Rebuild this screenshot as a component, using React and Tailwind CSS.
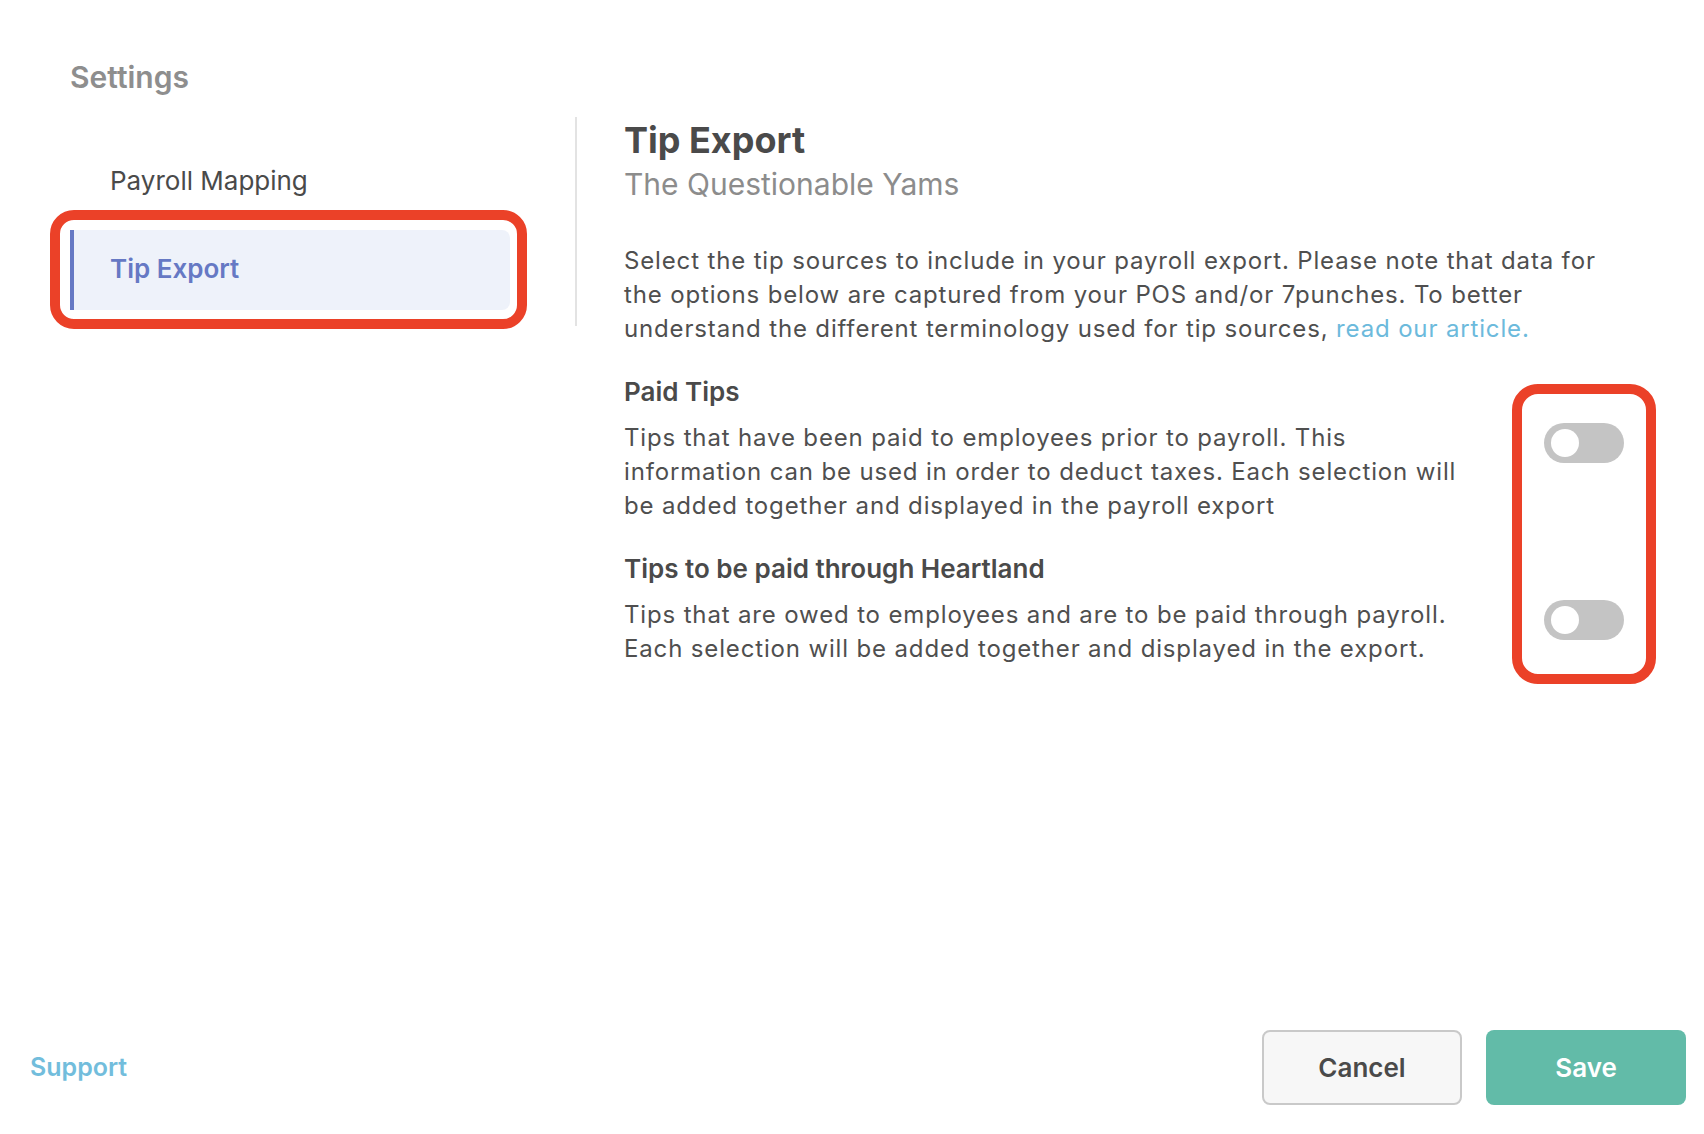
import React, { useState } from 'react';

// ========== SIDEBAR ==========
const SidebarItem = ({ label, active, onClick, highlight }) => (
  <div className="relative">
    <button
      onClick={onClick}
      className={`w-[440px] h-[80px] flex items-center pl-[36px] pb-[4px] border-l-4 rounded-r-[8px] text-[26px] text-left ${
        active
          ? 'border-[#6679c4] bg-[#eef2fa] text-[#6679c4] font-semibold'
          : 'border-transparent text-[#4a4a4a]'
      }`}
    >
      {label}
    </button>
    {highlight && (
      <div className="absolute -left-[20px] -right-[17px] -top-[20px] -bottom-[19px] border-[10px] border-[#eb4128] rounded-[24px] pointer-events-none" />
    )}
  </div>
);

const Toggle = ({ on, onChange }) => (
  <button
    onClick={() => onChange(!on)}
    className={`mt-[2px] w-[80px] h-[40px] rounded-full flex items-center px-[7px] shrink-0 ${
      on ? 'bg-[#62bba8] justify-end' : 'bg-[#c4c4c4] justify-start'
    }`}
  >
    <span className="w-[28px] h-[28px] rounded-full bg-white" />
  </button>
);

const TipSource = ({ title, desc, on, onChange, className }) => (
  <div className={className}>
    <h3 className="text-[26px] leading-[32px] font-semibold text-[#4a4a4a]">{title}</h3>
    <div className="mt-[13px] flex items-start justify-between">
      <p className="w-[848px] text-[24px] leading-[34px] tracking-[0.85px] text-[#4f4f4f]">{desc}</p>
      <Toggle on={on} onChange={onChange} />
    </div>
  </div>
);

export default function App() {
  const [activeTab, setActiveTab] = useState('tip');
  const [paidTips, setPaidTips] = useState(false);
  const [heartland, setHeartland] = useState(false);

  return (
    <div className="min-h-screen flex flex-col bg-white font-['Inter','Liberation_Sans',sans-serif] antialiased">
      <div className="flex-1 pl-[70px] pt-[57px]">
        <h1 className="text-[30px] leading-[40px] font-semibold text-[#8e8e8e]">Settings</h1>

        <div className="mt-[20px] flex items-start">
          {/* left nav */}
          <nav className="w-[507px] pr-[65px] pt-[25px] pb-[16px] border-r-2 border-[#e3e3e3] flex flex-col gap-2">
            <SidebarItem
              label="Payroll Mapping"
              active={activeTab === 'payroll'}
              onClick={() => setActiveTab('payroll')}
            />
            <SidebarItem
              label="Tip Export"
              active={activeTab === 'tip'}
              onClick={() => setActiveTab('tip')}
              highlight
            />
          </nav>

          {/* content */}
          <section className="pl-[47px] pt-[1px] w-[1047px]">
            <h2 className="text-[36px] leading-[44px] font-bold text-[#4a4a4a]">Tip Export</h2>
            <p className="mt-[2px] text-[30px] leading-[40px] text-[#8c8c8c]">The Questionable Yams</p>

            <p className="mt-[40px] text-[24px] leading-[34px] tracking-[0.85px] text-[#4f4f4f]">
              Select the tip sources to include in your payroll export. Please note that data for
              the options below are captured from your POS and/or 7punches. To better understand
              the different terminology used for tip sources,{' '}
              <a href="#" className="text-[#6cbadc]">read our article.</a>
            </p>

            <div className="relative mt-[30px]">
              <TipSource
                title="Paid Tips"
                desc="Tips that have been paid to employees prior to payroll. This information can be used in order to deduct taxes. Each selection will be added together and displayed in the payroll export"
                on={paidTips}
                onChange={setPaidTips}
              />
              <TipSource
                className="mt-[30px]"
                title="Tips to be paid through Heartland"
                desc="Tips that are owed to employees and are to be paid through payroll. Each selection will be added together and displayed in the export."
                on={heartland}
                onChange={setHeartland}
              />
              {/* annotation around toggles */}
              <div className="absolute top-[8px] -right-[32px] w-[144px] h-[300px] border-[10px] border-[#eb4128] rounded-[26px] pointer-events-none" />
            </div>
          </section>
        </div>
      </div>

      <footer className="flex items-center justify-between pl-[30px] pr-[18px] pb-[29px]">
        <a href="#" className="text-[25px] font-semibold text-[#72bddc]">Support</a>
        <div className="flex gap-[24px]">
          <button className="w-[200px] h-[75px] rounded-[8px] border-2 border-[#c9c9c9] bg-[#f7f7f7] text-[26px] font-semibold text-[#4a4a4a]">
            Cancel
          </button>
          <button className="w-[200px] h-[75px] rounded-[8px] bg-[#62bba8] text-[26px] font-semibold text-white">
            Save
          </button>
        </div>
      </footer>
    </div>
  );
}
